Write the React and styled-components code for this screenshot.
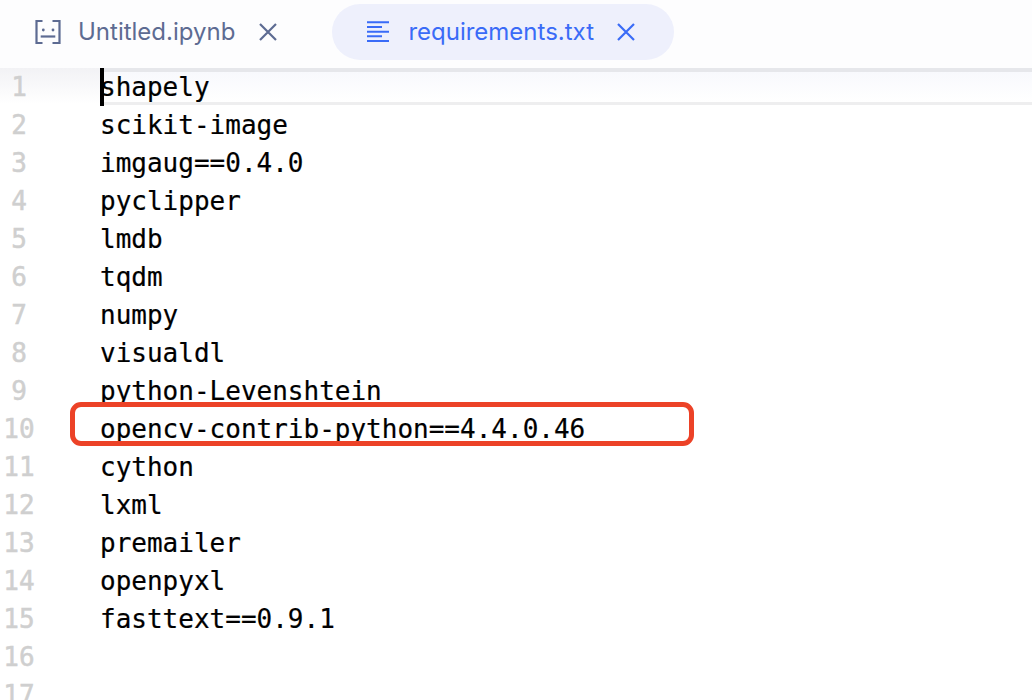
import React from "react";
import styled, { createGlobalStyle } from "styled-components";

const Global = createGlobalStyle`
  html, body { margin: 0; padding: 0; background: #fff; height: 100%; overflow: hidden; }
`;

const Page = styled.div`
  width: 1032px;
  height: 700px;
  overflow: hidden;
  background: #fff;
  display: flex;
  flex-direction: column;
`;

const TabBar = styled.div`
  flex: none;
  height: 68px;
  box-sizing: border-box;
  padding: 4px 0 4px 35px;
  display: flex;
  align-items: flex-start;
  background: #fdfdfe;
`;

const Tab = styled.div`
  height: 56px;
  box-sizing: border-box;
  display: flex;
  align-items: center;
  font-family: Inter, "Noto Sans", sans-serif;
  font-size: 24px;
  white-space: nowrap;
  color: ${(p) => (p.$active ? "#3a6bf7" : "#5d6b92")};
  ${(p) =>
    p.$active &&
    `
    background: #eef0fc;
    border-radius: 28px;
    padding: 0 38px 0 35px;
    margin-left: 54px;
  `}
`;

const TabLabel = styled.span`
  margin: ${(p) => (p.$active ? "0 22px 0 19px" : "0 23px 0 17px")};
  padding-bottom: 2px;
`;

const Editor = styled.div`
  position: relative;
  flex: 1;
  display: grid;
  grid-template-columns: 38px 1fr;
  column-gap: 62px;
  font-family: "DejaVu Sans Mono", monospace;
  font-size: 26px;
  line-height: 38px;
  background: linear-gradient(#f2f2f5, #ffffff) no-repeat 0 0 / 100px 36px;
`;

const ActiveLine = styled.div`
  position: absolute;
  left: 100px;
  right: 0;
  top: 0;
  height: 37px;
  box-sizing: border-box;
  background: linear-gradient(#f8f9fd, #ffffff);
  border-top: 4px solid #e6e7eb;
  border-bottom: 3px solid #eeeeef;
`;

const Gutter = styled.div`
  position: relative;
  text-align: center;
  color: #cfcfcf;
  -webkit-text-stroke: 0.5px #cfcfcf;
  opacity: 0.999;
`;

const Code = styled.div`
  position: relative;
  color: #000;
  -webkit-text-stroke: 0.2px #000;
`;

const Row = styled.div`
  height: 38px;
  white-space: pre;
`;

const Caret = styled.div`
  position: absolute;
  left: 0;
  top: 0;
  width: 4px;
  height: 38px;
  background: #000;
`;

const Highlight = styled.div`
  position: absolute;
  left: 70px;
  top: 334px;
  width: 624px;
  height: 44px;
  box-sizing: border-box;
  border: 5px solid #ec4227;
  border-radius: 11px;
`;

const NotebookIcon = () => (
  <svg width="26" height="26" viewBox="0 0 26 26" fill="none" stroke="#5d6b92" strokeWidth="2.2">
    <path d="M7.5 2H1.5V24H7.5M17.5 2H24.5V24H17.5" />
    <circle cx="8.3" cy="11" r="1.4" fill="#5d6b92" stroke="none" />
    <circle cx="18" cy="11" r="1.4" fill="#5d6b92" stroke="none" />
    <path d="M5.7 17.5H20.3" />
  </svg>
);

const LinesIcon = () => (
  <svg width="22" height="24" viewBox="0 0 22 24" fill="none" stroke="#3a6bf7" strokeWidth="2">
    <path d="M0 2.3H22M0 7H15M0 11.7H22M0 16.3H15M0 21H22" />
  </svg>
);

const CloseIcon = ({ color }) => (
  <svg width="20" height="20" viewBox="0 0 20 20" fill="none" stroke={color} strokeWidth="2.2">
    <path d="M2 2l16 16M18 2L2 18" />
  </svg>
);

const lines = [
  "shapely",
  "scikit-image",
  "imgaug==0.4.0",
  "pyclipper",
  "lmdb",
  "tqdm",
  "numpy",
  "visualdl",
  "python-Levenshtein",
  "opencv-contrib-python==4.4.0.46",
  "cython",
  "lxml",
  "premailer",
  "openpyxl",
  "fasttext==0.9.1",
  "",
  "",
];

export default function App() {
  return (
    <Page>
      <Global />
      <TabBar>
        <Tab>
          <NotebookIcon />
          <TabLabel>Untitled.ipynb</TabLabel>
          <CloseIcon color="#5d6b92" />
        </Tab>
        <Tab $active>
          <LinesIcon />
          <TabLabel $active>requirements.txt</TabLabel>
          <CloseIcon color="#3a6bf7" />
        </Tab>
      </TabBar>
      <Editor>
        <ActiveLine />
        <Gutter>
          {lines.map((_, i) => (
            <Row key={i}>{i + 1}</Row>
          ))}
        </Gutter>
        <Code>
          {lines.map((l, i) => (
            <Row key={i}>{l}</Row>
          ))}
          <Caret />
        </Code>
        <Highlight />
      </Editor>
    </Page>
  );
}
